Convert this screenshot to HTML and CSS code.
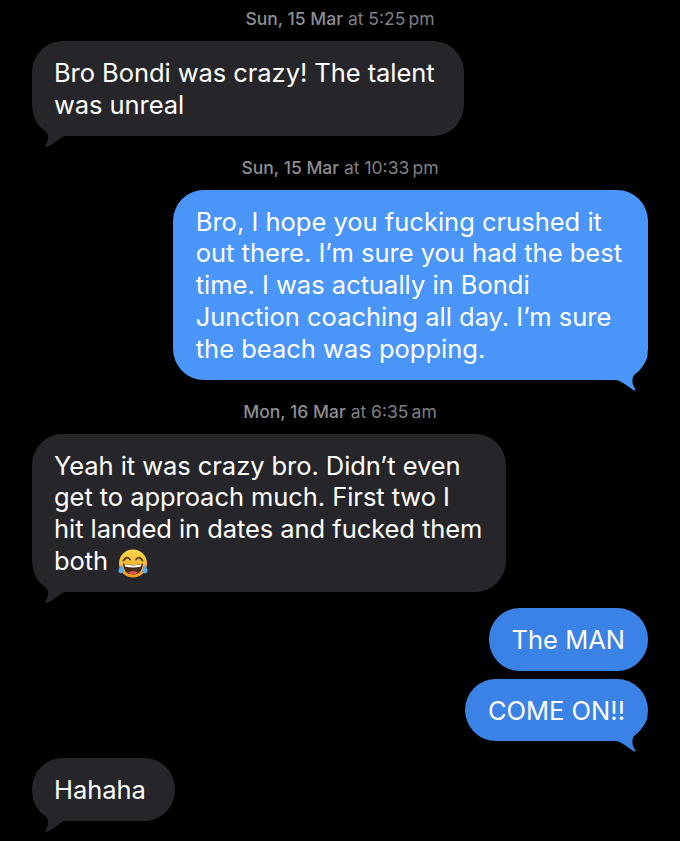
FILE: index.html
```html
<!DOCTYPE html>
<html>
<head>
<title>Messages</title>
<link rel="stylesheet" href="styles.css">
</head>
<body>
<main class="thread">
    <p class="stamp"><b>Sun, 15 Mar</b> at 5:25&#8201;pm</p>
    <div class="bubble them">
        Bro Bondi was crazy! The talent<br>was unreal
        <svg class="tail" width="36" height="36" viewBox="0 0 36 36"><path d="M1 0C1.500 8 6 15 13 20C16 22.500 17 26 15.500 30C15 33 12.500 35 13 35.500C14 36 18 35 22 32C26 29 29 26 33 25L36 25L36 0Z"/></svg>
    </div>

    <p class="stamp"><b>Sun, 15 Mar</b> at 10:33&#8201;pm</p>
    <div class="bubble me light">
        Bro, I hope you fucking crushed it<br>out there. I’m sure you had the best<br>time. I was actually in Bondi<br>Junction coaching all day. I’m sure<br>the beach was popping.
        <svg class="tail" width="36" height="36" viewBox="0 0 36 36"><path d="M35.500 0C35 6 31 11 26 15C21 19 19 25 21.500 31C22.500 33 24 35 23.500 35.500C22 36 20 34 17 32C12 28.500 8 25.500 4 25L0 25L0 0Z"/></svg>
    </div>

    <p class="stamp"><b>Mon, 16 Mar</b> at 6:35&#8201;am</p>
    <div class="bubble them wide">
        Yeah it was crazy bro. Didn’t even<br>get to approach much. First two I<br>hit landed in dates and fucked them<br>both
        <svg class="emoji" width="32" height="32" viewBox="0 0 32 32">
            <defs>
                <linearGradient id="face" x1="0" y1="0" x2="0" y2="1">
                    <stop offset="0" stop-color="#fbd84e"/>
                    <stop offset="1" stop-color="#ee9a22"/>
                </linearGradient>
            </defs>
            <circle cx="16" cy="15.500" r="14" fill="url(#face)"/>
            <path d="M6.500 12.500Q9.500 7.500 13 11.500M19 11.500Q22.500 7.500 25.500 12.500" fill="none" stroke="#5b3a17" stroke-width="1.800" stroke-linecap="round"/>
            <path d="M6 15.500Q16 18.500 26 15.500Q25.500 26.500 16 26.500Q6.500 26.500 6 15.500Z" fill="#4a2a12"/>
            <path d="M7.500 16.300Q16 18.600 24.500 16.300L24 18.600Q16 20.600 8 18.600Z" fill="#fff"/>
            <path d="M11 24.500Q16 22 21 24.500Q18.500 26.500 16 26.500Q13.500 26.500 11 24.500Z" fill="#e8574f"/>
            <path d="M4.500 17C2.500 19.500 1 21.500 1.500 23.500C2 25.500 5 26 6.500 24C7.300 22.500 6 19.500 4.500 17Z" fill="#5aa9ee"/>
            <path d="M27.500 17C29.500 19.500 31 21.500 30.500 23.500C30 25.500 27 26 25.500 24C24.700 22.500 26 19.500 27.500 17Z" fill="#5aa9ee"/>
        </svg>
        <svg class="tail" width="36" height="36" viewBox="0 0 36 36"><path d="M1 0C1.500 8 6 15 13 20C16 22.500 17 26 15.500 30C15 33 12.500 35 13 35.500C14 36 18 35 22 32C26 29 29 26 33 25L36 25L36 0Z"/></svg>
    </div>

    <div class="bubble me after-them">The MAN</div>
    <div class="bubble me next">
        COME ON!!
        <svg class="tail" width="36" height="36" viewBox="0 0 36 36"><path d="M35.500 0C35 6 31 11 26 15C21 19 19 25 21.500 31C22.500 33 24 35 23.500 35.500C22 36 20 34 17 32C12 28.500 8 25.500 4 25L0 25L0 0Z"/></svg>
    </div>

    <div class="bubble them after-me">
        Hahaha
        <svg class="tail" width="36" height="36" viewBox="0 0 36 36"><path d="M1 0C1.500 8 6 15 13 20C16 22.500 17 26 15.500 30C15 33 12.500 35 13 35.500C14 36 18 35 22 32C26 29 29 26 33 25L36 25L36 0Z"/></svg>
    </div>
</main>
</body>
</html>
```

FILE: styles.css
```css
html {
    height: 100%;
    background-color: #000;
}

body {
    margin: 0;
    height: 100%;
    font-family: Inter, "Liberation Sans", sans-serif;
    overflow: hidden;
}

.thread {
    display: flex;
    flex-direction: column;
    padding: 8px 32px 0;
}

.stamp {
    margin: 21px 0 11px;
    height: 22px;
    line-height: 22px;
    font-size: 17.500px;
    text-align: center;
    color: #7f7f84;
}

.stamp:first-child {
    margin-top: 0;
}

.stamp b {
    font-weight: 500;
    color: #8e8e93;
}

.bubble {
    position: relative;
    box-sizing: border-box;
    padding: 16px 29px 15px 22px;
    border-radius: 31px;
    font-size: 25.500px;
    line-height: 31.800px;
    white-space: nowrap;
    color: #fff;
}

.them {
    align-self: flex-start;
    letter-spacing: -0.06px;
    background-color: #26262a;
}

.me {
    align-self: flex-end;
    padding: 16px 23px 15px;
    background-color: #3b82e6;
}

.light {
    padding-right: 26px;
    background-color: #4a96f8;
}

.wide {
    padding-right: 24px;
}

.after-them {
    margin-top: 16px;
}

.next {
    margin-top: 8px;
}

.after-me {
    margin-top: 17px;
}

.tail {
    position: absolute;
    bottom: -11px;
    z-index: -1;
    display: block;
}

.them .tail {
    left: 0;
    fill: #26262a;
}

.me .tail {
    right: 0;
    fill: #3b82e6;
}

.light .tail {
    fill: #4a96f8;
}

.emoji {
    margin: -8px 0 -6px 2px;
    vertical-align: -4px;
}
```
